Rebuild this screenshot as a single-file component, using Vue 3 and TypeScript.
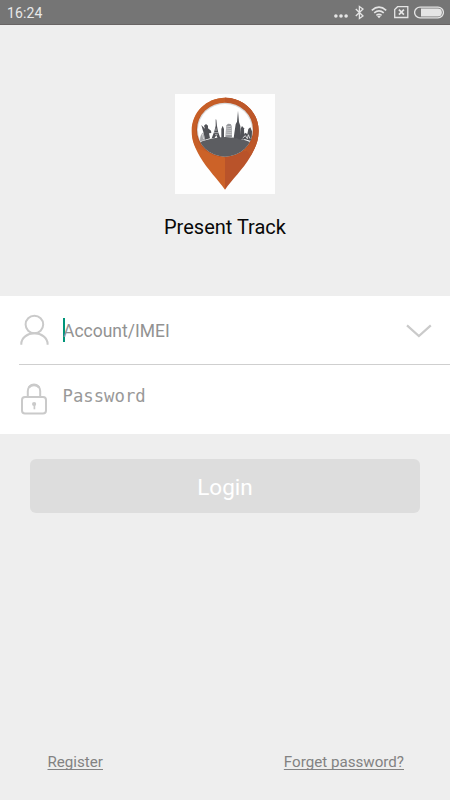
<script setup lang="ts">
import { ref } from 'vue'

const time = ref<string>('16:24')
const appName = 'Present Track'
</script>

<template>
  <main class="screen">
    <header class="status">
      <span class="time">{{ time }}</span>
      <div class="indicators">
        <svg class="dots" width="14" height="24" viewBox="0 0 14 24">
          <circle cx="1.9" cy="16" r="1.8" /><circle cx="7" cy="16" r="1.8" /><circle cx="12.1" cy="16" r="1.8" />
        </svg>
        <svg class="bluetooth" width="9" height="24" viewBox="0 0 9 24">
          <path d="M.8 9 8 16 4.4 18.6V6.4L8 9 .8 16" />
        </svg>
        <svg class="wifi" width="16" height="24" viewBox="0 0 16 24">
          <path d="M.8 10.3Q8 4 15.2 10.3M3.2 12.9q4.8-4 9.6 0M5.4 15.3q2.6-2 5.2 0" />
          <path class="fill" d="M6.2 16.2q1.8-1.2 3.6 0L8 18.2z" />
        </svg>
        <svg class="sim" width="15" height="24" viewBox="0 0 15 24">
          <path d="M3.6 6.7h10.2v10.8H.7V9.5z" /><path class="cross" d="m4.9 9.7 5 5m0-5-5 5" />
        </svg>
        <svg class="battery" width="30" height="24" viewBox="0 0 30 24">
          <rect x=".6" y="7.1" width="28.8" height="10.8" rx="5.4" />
          <path class="fill" d="M7 8.6h17a3.9 3.9 0 0 1 0 7.8H7z" />
        </svg>
      </div>
    </header>

    <section class="brand">
      <svg class="logo" width="100" height="100" viewBox="15 18 300 300">
        <defs>
          <clipPath id="window"><ellipse cx="165" cy="125" rx="84" ry="81" /></clipPath>
        </defs>
        <rect x="15" y="18" width="300" height="300" fill="#fefefe" />
        <path d="M166 29C110 29 65 72 65 128c0 31 10 51 25 78 23 39 53 67 75 99z" fill="#cc6228" />
        <path d="M165 29c56 0 101 43 101 99 0 31-10 51-25 78-23 39-54 67-76 99z" fill="#b9532a" />
        <path d="M66 128C66 72 112 29 165 29s100 43 100 99c0 20-5 38-13 52L165 208 78 180c-8-14-12-32-12-52z" fill="#c65e27" />
        <path d="M165 29c55 0 101 43 101 99 0 31-10 51-24 76l-14-18 20-60-83-80z" fill="#bd5729" />
        <ellipse cx="165" cy="126" rx="87" ry="82" fill="#b85323" />
        <ellipse cx="165" cy="125" rx="84" ry="81" fill="#d9dadb" />
        <ellipse cx="165" cy="126" rx="81" ry="78" fill="#fff" />
        <g clip-path="url(#window)">
          <path d="M78 168q87-42 176 0v45H78z" fill="#5c5d61" />
          <g fill="#515257">
            <path d="M90 160q-1-19 10-27l5 24z" fill="#a4a5a8" />
            <path d="m94 111 11 11-3-9 6-5 6 5v8l9 7 1 7-7 1 3 15-15 4-4-20-3-10z" />
            <path d="m137 94 2 1 2 19 3 16 7 21h-8l-4-9-6 9h-8l8-21 4-17z" />
            <path d="M154 149v-26l4-10 4 10v26z" />
            <path d="m166 147 3-35 5-5 8 1 3 6 1 33z" fill="#999a9e" />
            <path d="m191 150 2-14 4-27 4-8 3-33 3 34 4 12 1 33 1 8z" />
            <path d="m209 152 3-30 4-8 6 7 1 34z" />
            <path d="m216 151 9-17 7 4 3-15 6-5 5 12-1 30z" />
          </g>
          <path d="m169 117 13-2m-14 8 15-1m-15 7 16-1m-17 7 17-1m-17 6 18-1M97 138l4 15m37-32v8m-6 5h14m-3 6h-8" fill="none" stroke="#fff" stroke-width="1.6" />
          <path d="m218 150 8-7 6 9 3-12 5 12" fill="none" stroke="#fff" stroke-width="2.2" />
        </g>
      </svg>
      <h1>{{ appName }}</h1>
    </section>

    <section class="fields">
      <div class="field account">
        <svg class="icon" width="30" height="34" viewBox="0 0 30 34">
          <circle cx="14.4" cy="10.5" r="8.8" /><path d="M1.3 30.8V30c0-6 6-10.7 13.1-10.7S27.6 24 27.6 30v.8" />
        </svg>
        <div class="entry"><span class="caret"></span><span class="hint">Account/IMEI</span></div>
        <svg class="chevron" width="26" height="14" viewBox="0 0 26 14"><path d="m1 1.4 11.9 10.7L24.8 1.4" /></svg>
      </div>
      <div class="field password">
        <svg class="icon" width="30" height="34" viewBox="0 0 30 34">
          <rect x="2" y="15" width="24" height="16.5" rx="3" />
          <path d="M7.8 15V9a6.2 6.6 0 0 1 12.4 0V15" />
          <path class="shackle" d="M8.8 5.6a6.2 5.4 0 0 1 10.4 0" />
          <circle class="keyhole" cx="14.1" cy="22" r="2.1" /><path class="key" d="M14.4 22v5.3" />
        </svg>
        <div class="entry"><span class="hint mono">Password</span></div>
      </div>
    </section>

    <button class="login" type="button">Login</button>

    <nav class="links">
      <a>Register</a>
      <a>Forget password?</a>
    </nav>
  </main>
</template>

<style>
body { background: #eee; }
</style>

<style scoped>
.screen {
  box-sizing: border-box;
  width: 450px;
  height: 800px;
  display: flex;
  flex-direction: column;
  background: #eee;
  font-family: Roboto, "Liberation Sans", sans-serif;
  overflow: hidden;
}
.status {
  box-sizing: border-box;
  flex: none;
  height: 25px;
  display: flex;
  justify-content: space-between;
  padding: 0 6px 0 7px;
  background: #757575;
  border-bottom: 1px solid #686464;
  color: #e8e8e8;
}
.time { font-size: 14px; line-height: 26px; letter-spacing: .1px; }
.indicators { display: flex; }
.indicators svg { fill: none; stroke: #e5e5e5; stroke-width: 1.3; }
.indicators .fill, .indicators .dots circle { fill: #e5e5e5; stroke: none; }
.bluetooth { margin-left: 7px; }
.wifi { margin-left: 7px; }
.indicators .wifi { stroke-width: 1.6; }
.sim { margin-left: 7px; }
.indicators .cross { stroke-width: 1.7; }
.battery { margin-left: 5px; }
.brand {
  flex: none;
  box-sizing: border-box;
  height: 271px;
  padding-top: 69px;
  display: flex;
  flex-direction: column;
  align-items: center;
}
.logo { display: block; }
h1 { margin: 20px 0 0; font-size: 20px; font-weight: 400; line-height: 26px; color: #080808; }
.fields { flex: none; height: 138px; background: #fff; }
.field { box-sizing: border-box; display: flex; align-items: flex-start; padding-left: 20px; }
.account {
  height: 69px;
  padding-right: 18px;
  background: linear-gradient(#cfcfcf, #cfcfcf) 19px 68px / 431px 1px no-repeat;
}
.password { height: 69px; }
.icon { flex: none; margin-top: 18px; fill: none; stroke: #cacaca; stroke-width: 2; }
.password .icon { margin-top: 17px; }
.shackle { stroke-width: 2.4; }
.keyhole { fill: #cacaca; stroke: none; }
.key { stroke-width: 1.7; }
.entry { flex: 1; display: flex; margin-left: 13px; }
.account .entry { margin-top: 22px; }
.password .entry { margin-top: 18px; margin-left: 12.5px; }
.caret { width: 2px; height: 24px; margin-right: -2px; background: #009579; }
.hint { font-size: 17.5px; line-height: 26px; color: #929292; }
.mono { font-family: "DejaVu Sans Mono", monospace; font-size: 17.3px; color: #999; }
.chevron { margin-top: 28px; fill: none; stroke: #cacaca; stroke-width: 2.2; }
.login {
  flex: none;
  height: 54px;
  margin: 25px 30px 0;
  padding: 2px 0 0;
  border: 0;
  border-radius: 6px;
  background: #ddd;
  color: #fff;
  font-family: inherit;
  font-size: 22.5px;
}
.links {
  margin-top: auto;
  padding: 0 46px 28px 47.5px;
  display: flex;
  justify-content: space-between;
  font-size: 15.15px;
  line-height: 20px;
  color: #828282;
}
.links a { text-decoration: underline; text-decoration-thickness: 1px; text-underline-offset: 2px; text-decoration-skip-ink: none; }
</style>
